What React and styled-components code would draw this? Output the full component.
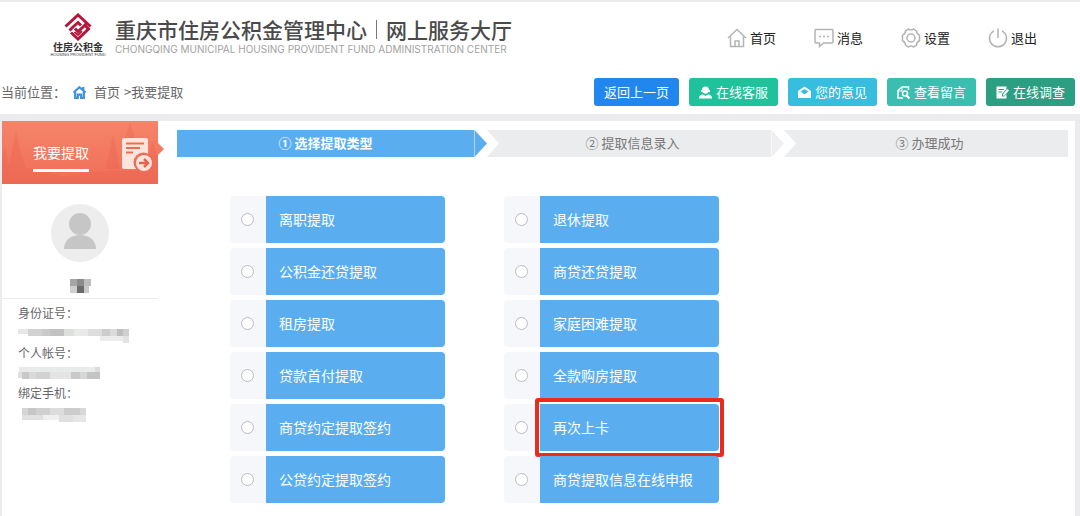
import React from "react";
import styled, { createGlobalStyle } from "styled-components";

const GlobalStyle = createGlobalStyle`
* {
  box-sizing: border-box;
}
body {
  margin: 0;
  background: #ffffff;
  font-family: "Noto Sans CJK SC", "Liberation Sans", sans-serif;
  font-size: 13px;
  color: #666666;
}
a {
  color: inherit;
  text-decoration: none;
}
`;

const Page = styled.div`
  border-top: 2px solid #ececee;
`;
const Header = styled.header`
  display: flex;
  justify-content: space-between;
  align-items: center;
  height: 72px;
  padding: 0 43px 0 52px;
`;
const Brand = styled.a`
  display: flex;
  align-items: center;
  gap: 11px;
  padding-bottom: 6px;
`;
const LogoBox = styled.span`
  display: flex;
  flex-flow: column;
  align-items: center;
  width: 52px;
  color: #333333;
`;
const LogoName = styled.span`
  font-family: "Noto Sans CJK SC", sans-serif;
  font-size: 10px;
  font-weight: 700;
  line-height: 12px;
  white-space: nowrap;
`;
const LogoSub = styled.span`
  font-family: "Liberation Sans", sans-serif;
  font-size: 4px;
  line-height: 4px;
  white-space: nowrap;
`;
const BrandText = styled.span`
  display: flex;
  flex-flow: column;
`;
const Title = styled.span`
  display: flex;
  align-items: center;
  font-size: 21px;
  font-weight: 500;
  line-height: 27px;
  color: #4a4a4a;
  white-space: nowrap;
`;
const TitleBar = styled.span`
  width: 1px;
  height: 19px;
  margin: 0 9px;
  background: #777777;
`;
const SubTitle = styled.span`
  font-family: Inter, "Open Sans", sans-serif;
  font-size: 10px;
  line-height: 12px;
  color: #a2a2a2;
  white-space: nowrap;
`;
const Nav = styled.nav`
  display: flex;
  gap: 38px;
`;
const NavItem = styled.a`
  display: flex;
  align-items: center;
  gap: 3px;
  color: #222222;
  line-height: 20px;
`;
const NavIcon = styled.svg`
  width: 20px;
  height: 20px;
  fill: none;
  stroke: #b4b4b4;
  stroke-width: 1.5;
`;

const Toolbar = styled.div`
  display: flex;
  justify-content: space-between;
  align-items: center;
  height: 40px;
  padding: 0 5px 4px 1px;
`;
const Crumbs = styled.div`
  display: flex;
  align-items: center;
  line-height: 20px;
`;
const CrumbHome = styled.a`
  display: flex;
  align-items: center;
  gap: 8px;
  margin: 0 4px 0 7px;
`;
const Actions = styled.div`
  display: flex;
  gap: 10px;
`;
const ActionButton = styled.button`
  display: flex;
  align-items: center;
  justify-content: center;
  gap: 4px;
  height: 28px;
  padding: 0 10px;
  border: 0;
  border-radius: 3px;
  background: ${(p) => p.$color};
  color: #ffffff;
  font: inherit;
  line-height: 20px;
`;
const ActionIcon = styled.svg`
  width: 13px;
  height: 13px;
  fill: #ffffff;
`;

const Body = styled.div`
  display: flex;
  border: solid #ececee;
  border-width: 7px 5px 0 2px;
`;
const Sidebar = styled.aside`
  width: 156px;
  flex: none;
`;
const Banner = styled.div`
  position: relative;
  display: flex;
  justify-content: space-between;
  align-items: center;
  height: 63px;
  padding: 0 5px 0 31px;
  background: linear-gradient(#f58468, #f06e58);
  &::after {
    content: "";
    position: absolute;
    left: 100%;
    top: 22px;
    border: solid transparent;
    border-width: 6px 0 6px 6px;
    border-left-color: #f37b62;
  }
`;
const BannerArt = styled.svg`
  position: absolute;
  inset: 0;
  width: 100%;
  height: 100%;
`;
const BannerTitle = styled.h1`
  position: relative;
  margin: 8px 0 0;
  padding-bottom: 7px;
  border-bottom: 3px solid #ffffff;
  color: #ffffff;
  font-size: 14px;
  font-weight: 400;
  line-height: 20px;
`;
const BannerIcon = styled.svg`
  position: relative;
  width: 32px;
  height: 36px;
  margin-top: 2px;
`;
const Profile = styled.div`
  display: flex;
  flex-flow: column;
  align-items: center;
  padding: 20px 0 4px;
  border-bottom: 1px solid #ececee;
`;
const Avatar = styled.svg`
  width: 58px;
  height: 58px;
  margin-bottom: 17px;
`;
const InfoList = styled.dl`
  margin: 0;
  padding: 4px 0 0 16px;
  font-size: 12px;
  line-height: 20px;
`;
const InfoValue = styled.dd`
  display: flex;
  height: 20px;
  margin: 0;
`;

const Main = styled.main`
  flex: 1;
  min-width: 0;
  padding: 9px 7px 14px 19px;
`;
const Steps = styled.ol`
  display: grid;
  grid-template-columns: repeat(3, 1fr);
  margin: 0 0 39px;
  padding: 0;
  list-style: none;
`;
const Step = styled.li`
  position: relative;
  height: 27px;
  padding-left: ${(p) => (p.$first ? "0" : "20px")};
  background: ${(p) => (p.$active ? "#5aaef0" : "#ebecee")};
  color: ${(p) => (p.$active ? "#ffffff" : "#777777")};
  font-weight: ${(p) => (p.$active ? 700 : 400)};
  line-height: 25px;
  text-align: center;
`;
/* pointed end that overlaps the next step, with its white notch */
const StepArrow = styled.svg`
  position: absolute;
  z-index: 1;
  left: 100%;
  top: 0;
  width: 25px;
  height: 27px;
`;
const Options = styled.div`
  display: grid;
  grid-template-columns: repeat(2, 215px);
  gap: 5px 59px;
  padding-left: 53px;
`;
const Option = styled.label`
  display: flex;
  height: 47px;
`;
const RadioCell = styled.span`
  display: flex;
  align-items: center;
  justify-content: center;
  width: 36px;
  border-radius: 4px 0 0 4px;
  background: #f6f7fa;
`;
const Radio = styled.input`
  appearance: none;
  width: 13px;
  height: 13px;
  margin: 0 2px 1px 0;
  border: 1px solid #bbbcc0;
  border-radius: 50%;
  background: #ffffff;
  &:checked {
    background: #5aaef0;
  }
`;
const OptionName = styled.span`
  position: relative;
  flex: 1;
  padding-left: 13px;
  border-radius: 0 4px 4px 0;
  background: #5aaef0;
  color: #ffffff;
  font-size: 14px;
  line-height: 47px;
  &::after {
    content: "";
    display: ${(p) => (p.$marked ? "block" : "none")};
    position: absolute;
    inset: -6px -5px;
    border: 4px solid #ee2a1c;
    border-radius: 3px;
    box-shadow: inset 0 0 0 1px #ffffff;
  }
`;

const Logo = () => (
  <svg width="28" height="28" viewBox="0 0 28 28" fill="none" stroke="#b5173c" strokeWidth="3">
    <path d="M1.5 13.5 L14 2 L26.5 13.5" />
    <path d="M5.5 17.5 L9 14 L14 9.500 L17 12.500" />
    <path d="M22.500 10.500 L19 14 L14 18.500 L11 15.500" />
    <path d="M7 19.500 L14 26 L24.500 16 L20.500 12" />
    <path d="M10.500 19 L14 22 L18 18" strokeWidth="2" />
  </svg>
);

const navItems = [
  {
    name: "首页",
    icon: (
      <>
        <path d="M1 10 L10 1.500 L19 10" />
        <path d="M3.500 8.500 V18.500 H16.500 V8.500 M8 18 V13 H12 V18" />
      </>
    ),
  },
  {
    name: "消息",
    icon: (
      <>
        <path d="M2 1.500 H18 Q19 1.500 19 2.500 V14 Q19 15 18 15 H9.500 L5.500 18.500 V15 H2 Q1 15 1 14 V2.500 Q1 1.500 2 1.500 Z" />
        <path d="M5 8.500 H7 M9 8.500 H11 M13 8.500 H15" />
      </>
    ),
  },
  {
    name: "设置",
    icon: (
      <>
        <path d="M7.500 1 Q10 3 12.500 1 L15.500 2.800 Q15.500 6 18.500 7.200 V12.800 Q15.500 14 15.500 17.200 L12.500 19 Q10 17 7.500 19 L4.500 17.200 Q4.500 14 1.500 12.800 V7.200 Q4.500 6 4.500 2.800 Z" />
        <circle cx="10" cy="10" r="4" />
      </>
    ),
  },
  {
    name: "退出",
    icon: <path d="M6 2.800 A8.500 8.500 0 1 0 14 2.800 M10 0.500 V10" />,
  },
];

const actions = [
  { name: "返回上一页", color: "#2186ee" },
  {
    name: "在线客服",
    color: "#20c29c",
    icon: <path d="M6.500 0.500 a3.500 3.500 0 0 1 3.500 3.500 h1 v2 h-1.500 a3.500 3.500 0 0 1 -6 0 H2 V4 h1 A3.500 3.500 0 0 1 6.500 0.500 Z M0 12.500 Q0 8.500 4 8.500 L6.500 10 L9 8.500 Q13 8.500 13 12.500 Z" />,
  },
  {
    name: "您的意见",
    color: "#37bddd",
    icon: <path fillRule="evenodd" d="M6.500 0.500 L13 5 V12 H0 V5 Z M2.500 5.500 L6.500 8.500 L10.500 5.500 L6.500 3 Z" />,
  },
  {
    name: "查看留言",
    color: "#3bbdb0",
    icon: (
      <g fill="none" stroke="#ffffff" strokeWidth="1.500">
        <path d="M11.500 4 V1 H5 L1 4.500 V12 H6" />
        <path d="M1.500 5 H5 V1.500" strokeWidth="1" />
        <circle cx="8" cy="7.500" r="2.500" />
        <path d="M9.500 9.500 L12.500 12.500" strokeWidth="2" />
      </g>
    ),
  },
  {
    name: "在线调查",
    color: "#2c9f82",
    icon: (
      <>
        <path fillRule="evenodd" d="M0.500 0.500 H10.500 V3 L6 8 V10.500 H8 L10.500 8.500 V12.500 H0.500 Z M2.500 3 V4 H8 V3 Z M2.500 5.500 V6.500 H6 V5.500 Z" />
        <path d="M11.500 3 L13 4.500 L8.500 9.500 L7 9.800 L7.200 8 Z" />
      </>
    ),
  },
];

const options = [
  "离职提取",
  "退休提取",
  "公积金还贷提取",
  "商贷还贷提取",
  "租房提取",
  "家庭困难提取",
  "贷款首付提取",
  "全款购房提取",
  "商贷约定提取签约",
  "再次上卡",
  "公贷约定提取签约",
  "商贷提取信息在线申报",
];

/* masked personal values: [x, y, width, height, colour] */
const masks = {
  name: [
    [0, 0, 7, 7, "#a5a5a5"], [7, 0, 7, 7, "#8b8b8b"], [14, 0, 7, 7, "#bdbdbd"],
    [0, 7, 7, 7, "#cfcfcf"], [7, 7, 7, 7, "#6b6b6b"], [14, 7, 5, 7, "#c9c9c9"],
  ],
  id: [
    [0, 6, 10, 5, "#e6e6e6"], [10, 6, 14, 7, "#d2d2d2"], [24, 6, 8, 7, "#cacaca"],
    [32, 6, 14, 7, "#c2c2c2"], [46, 6, 10, 7, "#dcdfdc"], [56, 6, 14, 7, "#e9e9e9"],
    [70, 6, 14, 7, "#dddddd"], [84, 6, 8, 7, "#cccccc"], [92, 6, 7, 7, "#dadada"],
    [99, 6, 6, 7, "#bebebe"], [105, 6, 6, 7, "#cfcfcf"], [82, 13, 24, 5, "#ececec"],
    [105, 13, 6, 7, "#e3e3e3"],
  ],
  account: [
    [1, 4, 76, 5, "#e9eaea"], [77, 4, 5, 5, "#dcdcdc"], [0, 9, 4, 6, "#e1e1e1"],
    [4, 9, 7, 7, "#c8c8c8"], [11, 9, 7, 7, "#d9d9d9"], [18, 9, 14, 7, "#d2d2d2"],
    [32, 9, 21, 7, "#e4e4e4"], [53, 9, 9, 7, "#c9c9c9"], [62, 9, 7, 7, "#d6d6d6"],
    [69, 9, 13, 7, "#c4c4c4"],
  ],
  phone: [
    [4, 5, 6, 7, "#d4d4d4"], [10, 5, 8, 7, "#c6c6c6"], [18, 5, 14, 7, "#d0d0d0"],
    [32, 5, 14, 7, "#dddddd"], [46, 5, 16, 7, "#cccccc"], [62, 5, 6, 7, "#d8d8d8"],
    [4, 12, 21, 5, "#e0e0e0"], [25, 12, 16, 5, "#efefef"], [41, 12, 14, 7, "#e0e0e0"],
    [55, 12, 13, 7, "#e6e6e6"],
  ],
};

const Mask = ({ cells, width, height }) => (
  <svg width={width} height={height} aria-hidden="true">
    {cells.map(([x, y, w, h, color], i) => (
      <rect key={i} x={x} y={y} width={w} height={h} fill={color} />
    ))}
  </svg>
);

const Arrow = ({ color }) => (
  <StepArrow viewBox="0 0 25 27">
    <path d="M0 0 H13 L25 13.500 L13 27 H0 Z" fill="#ffffff" />
    <path d="M0.500 0 L13 13.500 L0.500 27 Z" fill={color} />
  </StepArrow>
);

const App = () => (
  <>
    <GlobalStyle />
    <Page>
      <Header>
        <Brand href="#">
          <LogoBox>
            <Logo />
            <LogoName>住房公积金</LogoName>
            <LogoSub>HOUSING PROVIDENT FUND</LogoSub>
          </LogoBox>
          <BrandText>
            <Title>
              重庆市住房公积金管理中心
              <TitleBar />
              网上服务大厅
            </Title>
            <SubTitle>CHONGQING MUNICIPAL HOUSING PROVIDENT FUND ADMINISTRATION CENTER</SubTitle>
          </BrandText>
        </Brand>
        <Nav>
          {navItems.map((item) => (
            <NavItem href="#" key={item.name}>
              <NavIcon viewBox="0 0 20 20">{item.icon}</NavIcon>
              {item.name}
            </NavItem>
          ))}
        </Nav>
      </Header>

      <Toolbar>
        <Crumbs>
          当前位置：
          <CrumbHome href="#">
            <svg width="13" height="13" viewBox="0 0 12 12" fill="none" stroke="#3f8fe0" strokeWidth="2">
              <path d="M0.500 6 L6 1.200 L11.500 6 M9.500 1 V4" />
              <path d="M2 5.500 V11 H4.500 V8 H7.500 V11 H10 V5.500" />
            </svg>
            首页
          </CrumbHome>
          &gt;我要提取
        </Crumbs>
        <Actions>
          {actions.map((action) => (
            <ActionButton type="button" key={action.name} $color={action.color}>
              {action.icon && <ActionIcon viewBox="0 0 13 13">{action.icon}</ActionIcon>}
              {action.name}
            </ActionButton>
          ))}
        </Actions>
      </Toolbar>

      <Body>
        <Sidebar>
          <Banner>
            <BannerArt viewBox="0 0 156 63" preserveAspectRatio="none">
              <g fill="#e9604b" opacity="0.3">
                <path d="M14 10 L17 24 L20 36 L24 48 H5 L9 36 L11 24 Z" />
                <path d="M3 26 L8 50 H0 V34 Z" />
                <path d="M111 14 L114 28 L118 48 H104 L108 28 Z" />
                <path d="M128 2 L132 14 L136 34 H120 L124 14 Z" />
                <path d="M150 20 L156 36 V56 H142 Z" />
                <path d="M0 50 Q30 42 60 56 Q100 46 156 52 V63 H0 Z" />
              </g>
            </BannerArt>
            <BannerTitle>我要提取</BannerTitle>
            <BannerIcon viewBox="0 0 32 36">
              <rect x="1" y="2" width="26" height="31" rx="2" fill="#ffe4dc" />
              <path d="M5 7.500 H23 M5 12 H19 M5 16.500 H12" stroke="#ee6c56" strokeWidth="2" />
              <circle cx="22.500" cy="26.500" r="10" fill="#ee6c56" />
              <circle cx="23" cy="27" r="8" fill="#ffe4dc" />
              <path d="M18 27 H26 M23 23 L27 27 L23 31" fill="none" stroke="#e8634d" strokeWidth="2.500" />
            </BannerIcon>
          </Banner>
          <Profile>
            <Avatar viewBox="0 0 58 58">
              <circle cx="29" cy="29" r="29" fill="#ededed" />
              <circle cx="29" cy="20" r="11" fill="#c6c6c6" />
              <path d="M13 45 C13 36 20 31 29 31 C38 31 45 36 45 45 Z" fill="#c6c6c6" />
            </Avatar>
            <Mask cells={masks.name} width={21} height={15} />
          </Profile>
          <InfoList>
            <dt>身份证号：</dt>
            <InfoValue>
              <Mask cells={masks.id} width={116} height={20} />
            </InfoValue>
            <dt>个人帐号：</dt>
            <InfoValue>
              <Mask cells={masks.account} width={116} height={20} />
            </InfoValue>
            <dt>绑定手机：</dt>
            <InfoValue>
              <Mask cells={masks.phone} width={116} height={20} />
            </InfoValue>
          </InfoList>
        </Sidebar>

        <Main>
          <Steps>
            <Step $first $active>
              ① 选择提取类型
              <Arrow color="#5aaef0" />
            </Step>
            <Step>
              ② 提取信息录入
              <Arrow color="#efeff1" />
            </Step>
            <Step>③ 办理成功</Step>
          </Steps>
          <Options role="radiogroup" aria-label="提取类型">
            {options.map((name) => (
              <Option key={name}>
                <RadioCell>
                  <Radio type="radio" name="type" value={name} />
                </RadioCell>
                <OptionName $marked={name === "再次上卡"}>{name}</OptionName>
              </Option>
            ))}
          </Options>
        </Main>
      </Body>
    </Page>
  </>
);

export default App;
